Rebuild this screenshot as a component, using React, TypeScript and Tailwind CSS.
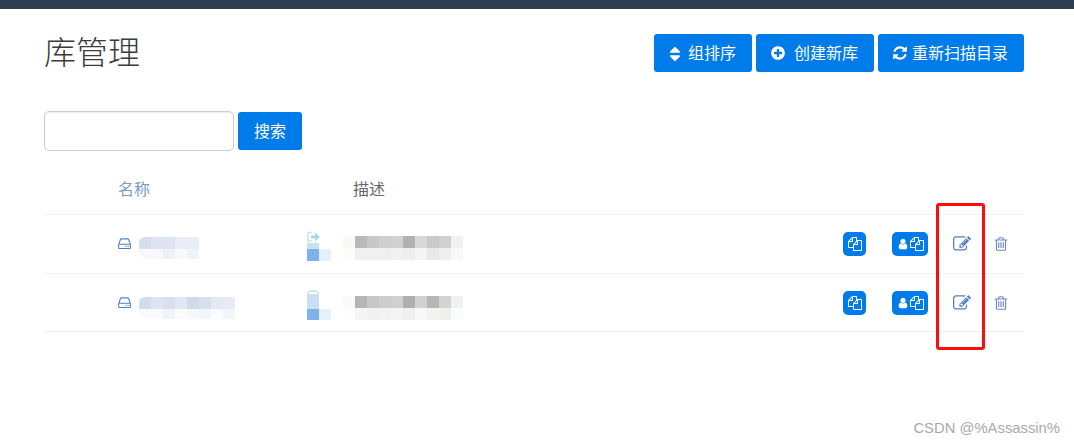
const icons = {
  edit: 'M888 1184l116-116-152-152-116 116v56h96v96h56zm440-720q-16-16-33 1l-350 350q-17 17-1 33t33-1l350-350q17-17 1-33zm80 594v190q0 119-84.5 203.5t-203.5 84.5h-832q-119 0-203.5-84.5t-84.5-203.5v-832q0-119 84.5-203.5t203.5-84.5h832q63 0 117 25 15 7 18 23 3 17-9 29l-49 49q-14 14-32 8-23-6-45-6h-832q-66 0-113 47t-47 113v832q0 66 47 113t113 47h832q66 0 113-47t47-113v-126q0-13 9-22l64-64q15-15 35-7t20 29zm-96-738l288 288-672 672h-288v-288zm444 132l-92 92-288-288 92-92q28-28 68-28t68 28l152 152q28 28 28 68t-28 68z',
  trash: 'M704 736v576q0 14-9 23t-23 9h-64q-14 0-23-9t-9-23v-576q0-14 9-23t23-9h64q14 0 23 9t9 23zm256 0v576q0 14-9 23t-23 9h-64q-14 0-23-9t-9-23v-576q0-14 9-23t23-9h64q14 0 23 9t9 23zm256 0v576q0 14-9 23t-23 9h-64q-14 0-23-9t-9-23v-576q0-14 9-23t23-9h64q14 0 23 9t9 23zm128 724v-948h-896v948q0 22 7 40.5t14.5 27 10.5 8.5h832q3 0 10.5-8.5t14.5-27 7-40.5zm-672-1076h448l-48-117q-7-9-17-11h-317q-10 2-17 11zm928 32v64q0 14-9 23t-23 9h-96v948q0 83-47 143.5t-113 60.5h-832q-66 0-113-58.5t-47-141.5v-952h-96q-14 0-23-9t-9-23v-64q0-14 9-23t23-9h309l70-167q15-37 54-63t79-26h320q40 0 79 26t54 63l70 167h309q14 0 23 9t9 23z',
  hdd: 'M1040 1120q0 33-23.5 56.5t-56.5 23.5-56.5-23.5-23.5-56.5 23.5-56.5 56.5-23.5 56.5 23.5 23.5 56.5zm256 0q0 33-23.5 56.5t-56.5 23.5-56.5-23.5-23.5-56.5 23.5-56.5 56.5-23.5 56.5 23.5 23.5 56.5zm128 160v-320q0-13-9.5-22.5t-22.5-9.5h-1216q-13 0-22.5 9.5t-9.5 22.5v320q0 13 9.5 22.5t22.5 9.5h1216q13 0 22.5-9.5t9.5-22.5zm-1230-480h1180l-157-482q-4-13-16-21.5t-26-8.5h-782q-14 0-26 8.5t-16 21.5zm1358 160v320q0 66-47 113t-113 47h-1216q-66 0-113-47t-47-113v-320q0-25 16-75l197-606q17-53 63-86t101-33h782q55 0 101 33t63 86l197 606q16 50 16 75z',
  files: 'M1696 384q40 0 68 28t28 68v1216q0 40-28 68t-68 28h-960q-40 0-68-28t-28-68v-288h-544q-40 0-68-28t-28-68v-672q0-40 20-88t48-76l408-408q28-28 76-48t88-20h416q40 0 68 28t28 68v328q68-40 128-40h416zm-544 213l-299 299h299v-299zm-640-384l-299 299h299v-299zm196 647l316-316v-416h-384v416q0 40-28 68t-68 28h-416v640h512v-256q0-40 20-88t48-76zm956 804v-1152h-384v416q0 40-28 68t-68 28h-416v640h896z',
  refresh: 'M1639 1056q0 5-1 7-64 268-268 434.5t-478 166.5q-146 0-282.5-55t-243.5-157l-129 129q-19 19-45 19t-45-19-19-45v-448q0-26 19-45t45-19h448q26 0 45 19t19 45-19 45l-137 137q71 66 161 102t187 36q134 0 250-65t186-179q11-17 53-117 8-23 30-23h192q13 0 22.5 9.5t9.5 22.5zm25-800v448q0 26-19 45t-45 19h-448q-26 0-45-19t-19-45 19-45l138-138q-148-137-349-137-134 0-250 65t-186 179q-11 17-53 117-8 23-30 23h-199q-13 0-22.5-9.5t-9.5-22.5v-7q65-268 270-434.5t480-166.5q146 0 284 55.5t245 156.5l130-129q19-19 45-19t45 19 19 45z',
  sort: 'M1408 1088q0 26-19 45l-448 448q-19 19-45 19t-45-19l-448-448q-19-19-19-45t19-45 45-19h896q26 0 45 19t19 45zm0-384q0 26-19 45t-45 19h-896q-26 0-45-19t-19-45 19-45l448-448q19-19 45-19t45 19l448 448q19 19 19 45z',
  plus: 'M1344 960v-128q0-26-19-45t-45-19h-256v-256q0-26-19-45t-45-19h-128q-26 0-45 19t-19 45v256h-256q-26 0-45 19t-19 45v128q0 26 19 45t45 19h256v256q0 26 19 45t45 19h128q26 0 45-19t19-45v-256h256q26 0 45-19t19-45zm320-64q0 209-103 385.5t-279.5 279.5-385.5 103-385.5-103-279.5-279.5-103-385.5 103-385.5 279.5-279.5 385.5-103 385.5 103 279.5 279.5 103 385.5z',
  user: 'M1536 1399q0 109-62.5 187t-150.5 78h-854q-88 0-150.5-78t-62.5-187q0-85 8.5-160.5t31.5-152 58.5-131 94-89 134.5-34.5q131 128 313 128t313-128q76 0 134.5 34.5t94 89 58.5 131 31.5 152 8.5 160.5zm-256-887q0 159-112.5 271.5t-271.5 112.5-271.5-112.5-112.5-271.5 112.5-271.5 271.5-112.5 271.5 112.5 112.5 271.5z',
};

function Icon({ name, className }: { name: keyof typeof icons; className?: string }) {
  return (
    <svg viewBox="0 0 1792 1792" className={className} fill="currentColor">
      <path d={icons[name]} />
    </svg>
  );
}

const nameCells = [
  {
    top: ['bg-[#d6deec]', 'bg-[#dfe5f0]', 'bg-[#dde3ef]', 'bg-[#e8edf6]', 'bg-[#e8eef7]'],
    bottom: ['bg-[#f6f8fb]', 'bg-[#f6f8fb]', 'bg-[#edf0f8]', 'bg-[#f8f9fc]', 'bg-[#f0f3f9]'],
  },
  {
    top: ['bg-[#d3dcec]', 'bg-[#dde4f0]', 'bg-[#d9e0ed]', 'bg-[#e2e7f2]', 'bg-[#cfdaec]', 'bg-[#d8e0ee]', 'bg-[#e3e8f3]', 'bg-[#e6ebf5]'],
    bottom: ['bg-[#f8fafc]', 'bg-[#f8fafc]', 'bg-[#f0f3f8]', 'bg-[#fbfcfe]', 'bg-[#f6f8fb]', 'bg-[#f2f5fa]', 'bg-[#fafbfd]', 'bg-[#f2f5fa]'],
  },
];

const descCells = [
  {
    top: ['bg-[#f8f8f7]', 'bg-[#b9b9b9]', 'bg-[#c8c8c8]', 'bg-[#cfcfd1]', 'bg-[#d1d1cf]', 'bg-[#b2b0b0]', 'bg-[#d8d8d7]', 'bg-[#c9c9cc]', 'bg-[#d0d0ce]', 'bg-[#f0f1f3]'],
    bottom: ['bg-[#fbfbfa]', 'bg-[#eff0ef]', 'bg-[#f0f0f0]', 'bg-[#f0efef]', 'bg-[#f1f1f0]', 'bg-[#efeeee]', 'bg-[#f4f4f4]', 'bg-[#e9e9e9]', 'bg-[#efefee]', 'bg-[#f9f9f9]'],
  },
  {
    top: ['bg-[#fafafa]', 'bg-[#b6b5b6]', 'bg-[#c7c7c6]', 'bg-[#cdcdd0]', 'bg-[#d0d0ce]', 'bg-[#b1aeb0]', 'bg-[#d1d1ce]', 'bg-[#b7b5b8]', 'bg-[#d3d3d0]', 'bg-[#f0f1f3]'],
    bottom: ['bg-[#fdfdfd]', 'bg-[#f5f5f5]', 'bg-[#f1f1f1]', 'bg-[#f2f2f2]', 'bg-[#f4f4f3]', 'bg-[#f0f0f0]', 'bg-[#f8f8f8]', 'bg-[#f3f3f3]', 'bg-[#efefee]', 'bg-[#fafbfb]'],
  },
];

function Mosaic({ top, bottom, short }: { top: string[]; bottom: string[]; short?: boolean }) {
  return (
    <div className="flex flex-col">
      <div className="flex">
        {top.map((c, i) => (
          <div key={i} className={`h-3 w-3 ${c} ${short && i === 0 ? 'rounded-tl-md' : ''}`} />
        ))}
      </div>
      <div className="flex">
        {bottom.map((c, i) => (
          <div key={i} className={`w-3 ${short ? 'h-[10px]' : 'h-3'} ${c} ${short && i === 0 ? 'rounded-bl-lg' : ''}`} />
        ))}
      </div>
    </div>
  );
}

function IconColumn({ index }: { index: number }) {
  return (
    <div className="mt-4 flex w-6 flex-col self-start">
      {index === 0 ? (
        <svg viewBox="0 0 14 12" className="h-3 w-[14px]" fill="none">
          <path d="M5 1.5H1V10H5" stroke="#c9e4ef" strokeWidth="1.5" />
          <path d="M4 4.5H8V1.5L13 6L8 10.5V7.5H4Z" fill="#a9d8e8" />
        </svg>
      ) : (
        <svg viewBox="0 0 14 4" className="h-1 w-[14px]" fill="none">
          <path d="M1 4Q1 1 5 1H9L12 4" stroke="#bfe0ee" strokeWidth="1.3" />
        </svg>
      )}
      <div className={index === 0 ? 'h-[6px] w-3 bg-[#c9e0f3]' : 'h-[15px] w-3 bg-[#c9dff3]'} />
      <div className="flex">
        <div className={`w-3 bg-[#7fb2ec] ${index === 0 ? 'h-3' : 'h-[11px]'}`} />
        <div className={`w-3 bg-[#e3f1fc] ${index === 0 ? 'h-3' : 'h-[11px]'}`} />
      </div>
    </div>
  );
}

function LibraryRow({ index }: { index: number }) {
  const dropClass = index === 0 ? 'mt-2' : 'mt-[10px]';
  return (
    <div className={`flex items-center border-t border-[#f1f1f1] ${index === 0 ? 'h-[59px]' : 'h-[58px]'}`}>
      <div className="flex w-[264px] items-center pl-[75px]">
        <Icon name="hdd" className="mt-[1px] mr-[6px] h-[15px] w-[15px] text-[#4f80c6]" />
        <div className={dropClass}>
          <Mosaic {...nameCells[index]} short />
        </div>
      </div>
      <IconColumn index={index} />
      <div className={`ml-3 ${dropClass}`}>
        <Mosaic {...descCells[index]} />
      </div>
      <div className="ml-auto flex items-center">
        <button className="flex h-6 w-[23px] items-center justify-center rounded-[5px] bg-[#007bea] text-white">
          <Icon name="files" className="h-[14px] w-[14px]" />
        </button>
        <button className="ml-[26px] flex h-6 w-9 items-center justify-center gap-[1px] rounded-[5px] bg-[#007bea] text-white">
          <Icon name="user" className="h-3 w-3" />
          <Icon name="files" className="h-[14px] w-[14px]" />
        </button>
        <Icon name="edit" className="ml-[25px] h-[18px] w-[18px] text-[#5580c6]" />
        <Icon name="trash" className="ml-[22px] mr-[15px] h-[16px] w-[16px] text-[#6f86c8]" />
      </div>
    </div>
  );
}

export default function App() {
  return (
    <div className="relative h-[444px] w-[1074px] overflow-hidden bg-white font-['Liberation_Sans','Noto_Sans_CJK_SC',sans-serif] text-[#333]">
      <div className="h-[9px] bg-[#2d3e50]" />

      <div className="px-[44px] pr-[50px]">
        <div className="flex h-[63px] items-start justify-between pt-[25px]">
          <h1 className="-mt-px text-[32px] leading-[40px] font-light text-[#3b3b3b]">库管理</h1>
          <div className="flex gap-1">
            <button className="flex h-[38px] w-[98px] items-center justify-center gap-2 rounded-[3px] bg-[#007bea] pt-px text-base text-white">
              <Icon name="sort" className="-mx-1 h-[18px] w-[18px]" />
              组排序
            </button>
            <button className="flex h-[38px] w-[118px] items-center justify-center gap-2 rounded-[3px] bg-[#007bea] pt-px pr-px text-base text-white">
              <Icon name="plus" className="-mt-px -ml-px h-[16px] w-[16px]" />
              创建新库
            </button>
            <button className="flex h-[38px] w-[146px] items-center justify-center gap-1 rounded-[3px] bg-[#007bea] pt-px pr-[2px] text-base text-white">
              <Icon name="refresh" className="-mt-px h-[16px] w-[16px]" />
              重新扫描目录
            </button>
          </div>
        </div>

        <div className="mt-[39px] flex items-center gap-1">
          <input className="h-10 w-[190px] rounded-[5px] border border-[#ccc] bg-white shadow-[inset_0_1px_1px_rgba(0,0,0,0.075)]" />
          <button className="h-[38px] w-16 rounded-[3px] bg-[#007bea] pt-[2px] text-base text-white">搜索</button>
        </div>

        <div className="mt-[26px] flex h-[37px] text-base leading-[26px]">
          <span className="ml-[74px] w-[235px] text-[#7a9ccb]">名称</span>
          <span className="text-[#666]">描述</span>
        </div>

        <div className="-ml-px border-b border-[#f1f1f1]">
          <LibraryRow index={0} />
          <LibraryRow index={1} />
        </div>
      </div>

      <div className="absolute top-[203px] left-[936px] h-[147px] w-[49px] rounded-[3px] border-[3px] border-[#f5120c]" />
      <div className="absolute top-[419px] right-[14px] text-[14.8px] leading-[18px] text-[#a9a9a9]">CSDN @%Assassin%</div>
    </div>
  );
}
